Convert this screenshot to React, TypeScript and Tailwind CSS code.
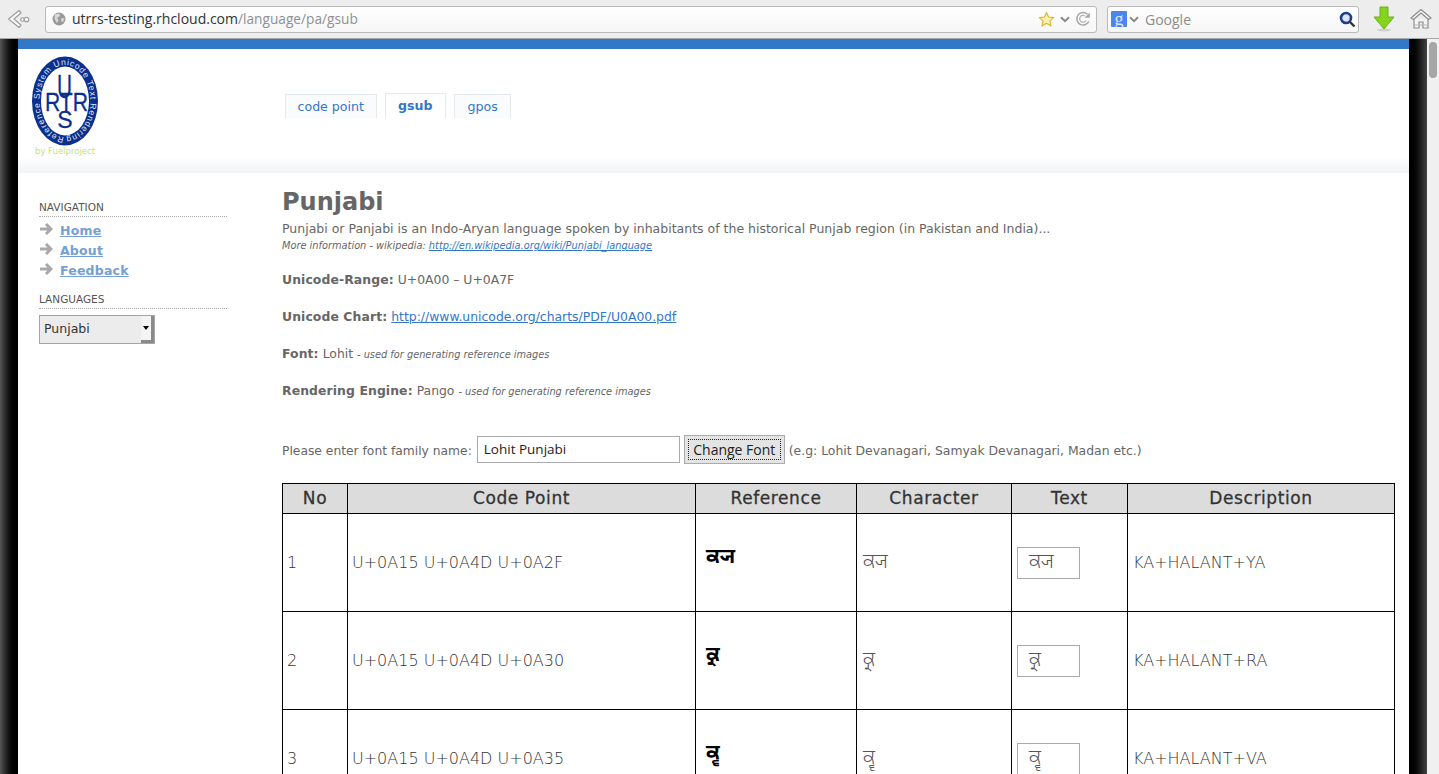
const dejavu = "font-['DejaVu_Sans',sans-serif]";

const rows = [
  { no: 1, code: "U+0A15 U+0A4D U+0A2F", text: "ਕ੍ਯ", desc: "KA+HALANT+YA" },
  { no: 2, code: "U+0A15 U+0A4D U+0A30", text: "ਕ੍ਰ", desc: "KA+HALANT+RA" },
  { no: 3, code: "U+0A15 U+0A4D U+0A35", text: "ਕ੍ਵ", desc: "KA+HALANT+VA" },
];

const BackIcon = () => (
  <svg width="24" height="24" viewBox="0 0 24 24" fill="none">
    <path d="M12 3.5 L1.5 12 L12 20.5 L14 18 L7 12 L14 6 Z" fill="#f8f8f8" stroke="#a0a0a0" strokeWidth="1.3" strokeLinejoin="round" />
    <circle cx="15.5" cy="12.5" r="1.8" fill="#f4f4f4" stroke="#9c9c9c" strokeWidth="1.1" />
    <circle cx="19.5" cy="12.5" r="2.3" fill="#f4f4f4" stroke="#9c9c9c" strokeWidth="1.1" />
  </svg>
);

const GlobeIcon = () => (
  <svg width="14" height="14" viewBox="0 0 14 14">
    <circle cx="7" cy="7" r="6.5" fill="#9a9a9a" />
    <path d="M3 2.5 L7 1.5 L8 4 L5 6 L6.5 8 L5 11 L2.5 7 Z M9.5 6 L12.5 6.5 L11 10 L9 9 Z" fill="#d8d8d8" />
  </svg>
);

const StarIcon = () => (
  <svg width="17" height="17" viewBox="0 0 18 18">
    <path d="M9 1.5 L11.2 6.4 L16.6 7 L12.6 10.5 L13.8 15.8 L9 13 L4.2 15.8 L5.4 10.5 L1.4 7 L6.8 6.4 Z" fill="#fbf2b4" stroke="#d9b630" strokeWidth="1.2" strokeLinejoin="round" />
  </svg>
);

const Chevron = () => (
  <svg width="10" height="7" viewBox="0 0 10 7" fill="none">
    <path d="M1 1.2 L5 5.2 L9 1.2" stroke="#8a8a8a" strokeWidth="2" />
  </svg>
);

const ReloadIcon = () => (
  <svg width="16" height="16" viewBox="0 0 16 16" fill="none">
    <path d="M13.8 10.5 A6.3 6.3 0 1 1 12.5 3.2" stroke="#a6a6a6" strokeWidth="1.5" />
    <path d="M11 9.5 A3.4 3.4 0 1 1 10 5" stroke="#b4b4b4" strokeWidth="1.2" />
    <path d="M14.8 1.5 L14.8 6.8 L9.5 6.8 Z" fill="#a6a6a6" />
  </svg>
);

const SearchIcon = () => (
  <svg width="17" height="17" viewBox="0 0 17 17" fill="none">
    <circle cx="7" cy="7" r="5" fill="#dbe6f6" stroke="#1e3f8f" strokeWidth="2.6" />
    <path d="M11 11 L15.5 15.5" stroke="#333" strokeWidth="2.4" />
  </svg>
);

const DownloadIcon = () => (
  <svg width="22" height="26" viewBox="0 0 22 26">
    <ellipse cx="11" cy="24" rx="7" ry="1.5" fill="#cfcfcf" />
    <path d="M7 1 H15 V11 H21 L11 23 L1 11 H7 Z" fill="#85d51f" stroke="#6ab012" strokeWidth="1" strokeLinejoin="round" />
  </svg>
);

const HomeIcon = () => (
  <svg width="22" height="22" viewBox="0 0 22 22" fill="none">
    <path d="M1 10 L11 1.5 L21 10 L18.5 11.5 L11 5 L3.5 11.5 Z" fill="#f4f4f4" stroke="#8e8e8e" strokeWidth="1.2" strokeLinejoin="round" />
    <path d="M4 11 V20 H9 V14 H13 V20 H18 V11" fill="#f4f4f4" stroke="#8e8e8e" strokeWidth="1.2" />
    <path d="M4 17 H18" stroke="#b5b5b5" strokeWidth="1" />
  </svg>
);

const ToolBar = () => (
  <div className="flex h-[39px] shrink-0 items-center border-b border-[#a8a8a8] bg-[#ededed] font-['Open_Sans',sans-serif]">
    <div className="ml-[7px] w-[38px] shrink-0">
      <BackIcon />
    </div>
    <div className="flex h-[27px] w-[1052px] shrink-0 items-center rounded-[3px] border border-[#b9b9b9] bg-gradient-to-b from-[#ffffff] to-[#f6f6f6] pl-[6px] pr-[5px]">
      <GlobeIcon />
      <span className="ml-[6px] text-[14px] text-[#2e3436]">
        utrrs-testing.rhcloud.com<span className="text-[13.7px] text-[#8e9092]">/language/pa/gsub</span>
      </span>
      <div className="ml-auto flex items-center gap-[5px]">
        <StarIcon />
        <Chevron />
        <ReloadIcon />
      </div>
    </div>
    <div className="ml-[10px] flex h-[27px] w-[252px] shrink-0 items-center rounded-[3px] border border-[#b9b9b9] bg-gradient-to-b from-[#ffffff] to-[#f6f6f6] pl-[3px] pr-[2px]">
      <span className="flex h-[16px] w-[16px] items-center justify-center rounded-[1px] bg-[#4a86ee] font-['Liberation_Serif',serif] text-[18px] leading-none text-[#dfe9fb]">g</span>
      <span className="ml-[2px]">
        <Chevron />
      </span>
      <span className="ml-[6px] text-[14px] text-[#8c8c8c]">Google</span>
      <span className="ml-auto">
        <SearchIcon />
      </span>
    </div>
    <div className="ml-[14px] w-[22px] shrink-0">
      <DownloadIcon />
    </div>
    <div className="ml-[15px] w-[22px] shrink-0">
      <HomeIcon />
    </div>
  </div>
);

const Logo = () => (
  <div className="flex flex-col items-center">
    <svg width="68" height="90" viewBox="0 0 68 90">
      <defs>
        <path id="ring" d="M34 81 A25.5 36 0 0 1 34 9 A25.5 36 0 0 1 34 81" />
      </defs>
      <ellipse cx="34" cy="45" rx="33" ry="44.5" fill="#0a2f8c" />
      <ellipse cx="34" cy="45" rx="24" ry="34.5" fill="#fff" />
      <text fontFamily="Liberation Sans" fontSize="8.5" fill="#dfe5f2">
        <textPath href="#ring" startOffset="1" textLength="192" lengthAdjust="spacing">
          Reference System  Unicode Text Rendering
        </textPath>
      </text>
      <g fontFamily="Liberation Sans" fill="#0a2f8c" stroke="#0a2f8c" strokeWidth="0.3" textAnchor="middle">
        <text x="33.5" y="42" fontSize="34" textLength="15" lengthAdjust="spacingAndGlyphs">U</text>
        <text x="35.5" y="55" fontSize="26" textLength="43" lengthAdjust="spacingAndGlyphs">RTR</text>
        <text x="34" y="72" fontSize="23">S</text>
      </g>
    </svg>
    <span className="w-[80px] text-center text-[8.5px] font-medium leading-[11px] text-[#c3df7f]">by Fuelproject</span>
  </div>
);

const Tab = ({ label, active, wide }: { label: string; active?: boolean; wide?: boolean }) => (
  <a className={`block rounded-t-[1px] border border-b-0 border-[#e4e9ed] text-[12.6px] text-[#3278c8] ${wide ? "px-[12.5px]" : "px-[11.5px]"} ${active ? "h-[25px] bg-white pt-[3px] font-bold" : "h-[24px] bg-[#fafbfc] pt-[3px]"}`}>
    {label}
  </a>
);

const SideHeading = ({ children }: { children: string }) => (
  <h3 className="border-b border-dotted border-[#aaa] pb-[1px] text-[10.5px] leading-[15px] text-[#555]">{children}</h3>
);

const NavLink = ({ children }: { children: string }) => (
  <li className="flex h-[20px] items-center">
    <svg width="14" height="14" viewBox="0 0 14 14" fill="none" className="mb-[4px] shrink-0">
      <path d="M1 7 H12 M7 2 L12 7 L7 12" stroke="#a9a9a9" strokeWidth="3" />
    </svg>
    <a className="ml-[7px] text-[12.5px] font-bold tracking-[0.2px] text-[#74a0d4] underline">{children}</a>
  </li>
);

const Sidebar = () => (
  <aside className="ml-[21px] w-[188px] shrink-0 pt-[27px]">
    <SideHeading>NAVIGATION</SideHeading>
    <ul className="mt-[4px]">
      <NavLink>Home</NavLink>
      <NavLink>About</NavLink>
      <NavLink>Feedback</NavLink>
    </ul>
    <div className="mt-[11px]">
      <SideHeading>LANGUAGES</SideHeading>
    </div>
    <div className="mt-[6px] flex h-[29px] w-[116px] items-stretch border border-[#a5a5a5] bg-[#ececec]">
      <span className="flex-1 pl-[4px] pt-[4px] text-[12.5px] text-[#333]">Punjabi</span>
      <span className="flex w-[13px] items-center justify-center border-b-[3px] border-r-[3px] border-[#8a8a8a] bg-[#f4f4f4]">
        <span className="h-0 w-0 border-x-[3px] border-t-[4px] border-x-transparent border-t-black" />
      </span>
    </div>
  </aside>
);

const Field = ({ label, children }: { label: string; children: React.ReactNode }) => (
  <p className="mt-[21px] h-[16px] text-[12.4px] leading-[16px] text-[#666]">
    <b className="tracking-[0.1px]">{label}</b> {children}
  </p>
);

const Note = ({ children }: { children: string }) => <i className="text-[9.8px]">{children}</i>;

const Cell = ({ children, className = "" }: { children?: React.ReactNode; className?: string }) => (
  <td className={`border border-black pl-[4px] text-[16px] font-extralight text-[#333] ${className}`}>{children}</td>
);

const gurmukhi = "font-['Noto_Sans_Gurmukhi','Lohit_Punjabi','Noto_Sans','DejaVu_Sans',sans-serif]";

const DataTable = () => (
  <table className="mt-[17px] w-[1113px] table-fixed border-collapse">
    <colgroup>
      <col className="w-[65px]" />
      <col className="w-[348px]" />
      <col className="w-[161px]" />
      <col className="w-[155px]" />
      <col className="w-[116px]" />
      <col />
    </colgroup>
    <thead>
      <tr className="h-[30px] bg-[#dcdcdc]">
        {["No", "Code Point", "Reference", "Character", "Text", "Description"].map((h) => (
          <th key={h} className="border border-black text-center text-[17px] font-medium tracking-[0.6px] text-[#333] [-webkit-text-stroke:0.3px_#333]">
            {h}
          </th>
        ))}
      </tr>
    </thead>
    <tbody>
      {rows.map((r) => (
        <tr key={r.no} className="h-[98px]">
          <Cell>{r.no}</Cell>
          <Cell>{r.code}</Cell>
          <Cell className="pl-[10px]">
            <span className={`${gurmukhi} relative bottom-[4px] text-[21px] font-bold text-black`}>{r.text}</span>
          </Cell>
          <Cell className="pl-[6px]">
            <span className={`${gurmukhi} text-[20px] font-light text-[#555]`}>{r.text}</span>
          </Cell>
          <Cell className="pl-[5px]">
            <div className={`${gurmukhi} flex h-[32px] w-[63px] items-center border border-[#aaa] pl-[11px] text-[20px] font-light text-[#555]`}>{r.text}</div>
          </Cell>
          <Cell className="pl-[5px]">{r.desc}</Cell>
        </tr>
      ))}
    </tbody>
  </table>
);

const Main = () => (
  <main className="ml-[55px] w-[1113px] shrink-0 pt-[14px] text-[12.5px] text-[#666]">
    <h1 className="text-[24px] font-bold leading-[30px] text-[#666]">Punjabi</h1>
    <p className="mt-[4px] h-[16px] leading-[16px]">
      Punjabi or Panjabi is an Indo-Aryan language spoken by inhabitants of the historical Punjab region (in Pakistan and India)...
    </p>
    <p className="mt-[2px] h-[14px] text-[9.8px] italic leading-[14px]">
      More information - wikipedia: <a className="text-[#3278c8] underline">http://en.wikipedia.org/wiki/Punjabi_language</a>
    </p>
    <div className="-mt-[2px]">
      <Field label="Unicode-Range:">U+0A00 – U+0A7F</Field>
    </div>
    <Field label="Unicode Chart:">
      <a className="text-[#3278c8] underline">http://www.unicode.org/charts/PDF/U0A00.pdf</a>
    </Field>
    <Field label="Font:">
      Lohit <Note>- used for generating reference images</Note>
    </Field>
    <Field label="Rendering Engine:">
      Pango <Note>- used for generating reference images</Note>
    </Field>
    <form className="mt-[37px] flex h-[30px] items-center text-[12.3px]">
      <span>Please enter font family name:</span>
      <input
        readOnly
        value="Lohit Punjabi"
        className="mb-[4px] ml-[5px] h-[27px] w-[203px] border border-[#aaa] px-[6px] font-['Open_Sans',sans-serif] text-[13.5px] font-medium text-[#222]"
      />
      <button type="button" className="mb-[4px] ml-[4px] h-[29px] w-[101px] border border-[#aaa] bg-[#e4e4e4] p-[3px]">
        <span className="block h-full border border-dotted border-[#222] font-['Open_Sans',sans-serif] text-[14px] leading-[20px] text-[#222]">Change Font</span>
      </button>
      <span className="ml-[4px] text-[12.4px]">(e.g: Lohit Devanagari, Samyak Devanagari, Madan etc.)</span>
    </form>
    <DataTable />
  </main>
);

export default function App() {
  return (
    <div className={`flex h-[774px] w-[1439px] flex-col overflow-hidden bg-white ${dejavu}`}>
      <ToolBar />
      <div className="flex min-h-0 flex-1">
        <div className="w-[18px] shrink-0 bg-gradient-to-r from-[#555] via-[#111] to-black" />
        <div className="w-[1391px] shrink-0 overflow-hidden">
          <div className="h-[10px] bg-[#3278c8]" />
          <header className="flex h-[124px] bg-gradient-to-b from-white from-[87%] to-[#f1f3f4]">
            <div className="ml-[13px] w-[68px] shrink-0 pt-[7px]">
              <Logo />
            </div>
            <nav className="ml-[186px] flex items-end gap-[8px] self-start pt-[44px]">
              <Tab label="code point" />
              <Tab label="gsub" active wide />
              <Tab label="gpos" wide />
            </nav>
          </header>
          <div className="flex">
            <Sidebar />
            <Main />
          </div>
        </div>
        <div className="w-[18px] shrink-0 bg-gradient-to-r from-black via-[#111] to-[#444]" />
        <div className="w-[12px] shrink-0 bg-[#f0f0f0] px-[2px] pt-[3px]">
          <div className="h-[36px] rounded-full bg-[#a6a6a6]" />
        </div>
      </div>
    </div>
  );
}
